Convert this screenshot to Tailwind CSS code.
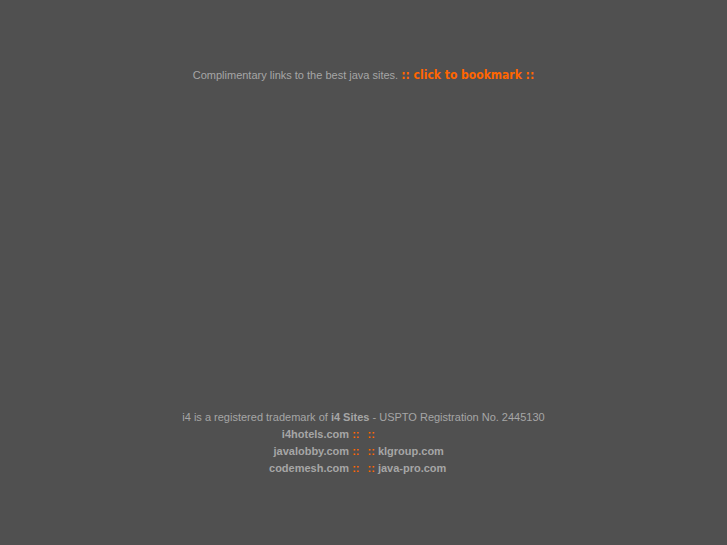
<!DOCTYPE html>
<html lang="en">
<head>
<meta charset="utf-8">
<title>i4 Sites</title>
<script src="https://cdn.jsdelivr.net/npm/@tailwindcss/browser@4"></script>
</head>
<body class="flex min-h-screen flex-col justify-between bg-[#505050] pt-16 pb-17 font-['Liberation_Sans',sans-serif] text-[11px] leading-[17px] text-[#a6a6a6]">
<header class="pt-[3px] text-center">
<p>Complimentary links to the best java sites. <a href="#" class="font-['DejaVu_Sans_Condensed','DejaVu_Sans',sans-serif] text-[12px] font-bold text-[#ff6600]">:: click to bookmark ::</a></p>
</header>
<footer class="text-center">
<p>i4 is a registered trademark of <a href="#" class="font-bold">i4 Sites</a> - USPTO Registration No. 2445130</p>
<ul class="grid grid-cols-2 gap-x-2 font-bold">
<li class="text-right"><a href="#">i4hotels.com</a> <span class="text-[#ff6600]">::</span></li>
<li class="text-left"><span class="text-[#ff6600]">::</span></li>
<li class="text-right"><a href="#">javalobby.com</a> <span class="text-[#ff6600]">::</span></li>
<li class="text-left"><span class="text-[#ff6600]">::</span> <a href="#">klgroup.com</a></li>
<li class="text-right"><a href="#">codemesh.com</a> <span class="text-[#ff6600]">::</span></li>
<li class="text-left"><span class="text-[#ff6600]">::</span> <a href="#">java-pro.com</a></li>
</ul>
</footer>
</body>
</html>
